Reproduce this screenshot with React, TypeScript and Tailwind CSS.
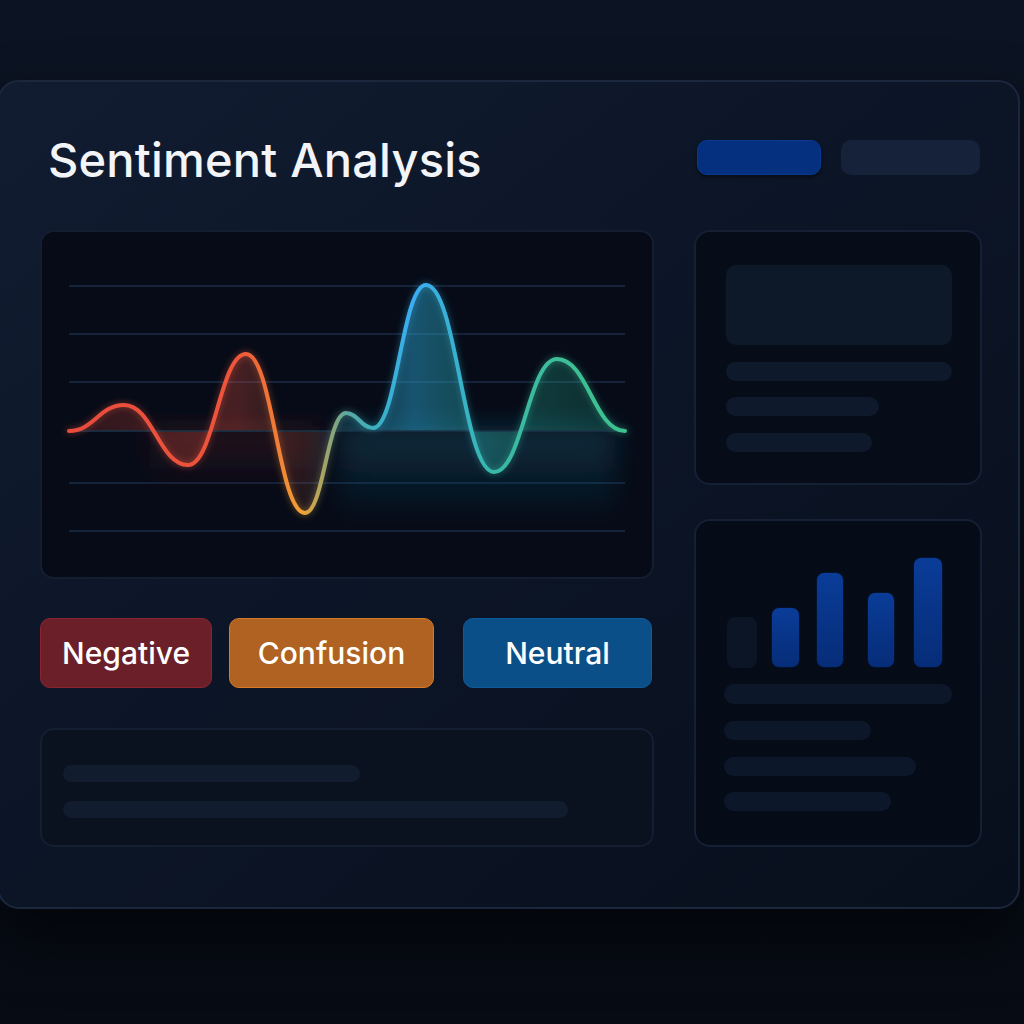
const points: [number, number][] = [
  [29, 201],
  [84, 175],
  [148, 235],
  [206, 124],
  [265, 283],
  [306, 183],
  [333, 198],
  [386, 55],
  [454, 242],
  [517, 129],
  [585, 201],
];

function smoothPath(pts: [number, number][]) {
  let d = `M${pts[0][0]} ${pts[0][1]}`;
  for (let i = 1; i < pts.length; i++) {
    const [x0, y0] = pts[i - 1];
    const [x1, y1] = pts[i];
    const dx = (x1 - x0) * 0.45;
    d += ` C${x0 + dx} ${y0} ${x1 - dx} ${y1} ${x1} ${y1}`;
  }
  return d;
}

const gridLines = [56, 104, 152, 253, 301];

function WaveChart() {
  const line = smoothPath(points);
  const area = `${line} L585 201 L29 201 Z`;

  return (
    <svg viewBox="2 2 610 345" preserveAspectRatio="none" className="w-full h-full">
      <defs>
        <linearGradient id="stroke" gradientUnits="userSpaceOnUse" x1="29" y1="0" x2="585" y2="0">
          <stop offset="0" stopColor="#e74c3c" />
          <stop offset="0.3" stopColor="#ee553b" />
          <stop offset="0.37" stopColor="#f07a35" />
          <stop offset="0.42" stopColor="#f2a535" />
          <stop offset="0.46" stopColor="#a0a46a" />
          <stop offset="0.5" stopColor="#5aa8a0" />
          <stop offset="0.55" stopColor="#3ab0c0" />
          <stop offset="0.62" stopColor="#3aaef2" />
          <stop offset="0.68" stopColor="#38b0d8" />
          <stop offset="0.76" stopColor="#38b8a8" />
          <stop offset="0.88" stopColor="#3dbe98" />
          <stop offset="1" stopColor="#3cc18e" />
        </linearGradient>
        <linearGradient id="fill" gradientUnits="userSpaceOnUse" x1="29" y1="0" x2="585" y2="0">
          <stop offset="0" stopColor="#e04a3a" stopOpacity="0.18" />
          <stop offset="0.3" stopColor="#e0503e" stopOpacity="0.3" />
          <stop offset="0.42" stopColor="#c06040" stopOpacity="0.15" />
          <stop offset="0.5" stopColor="#2a8ea8" stopOpacity="0.25" />
          <stop offset="0.62" stopColor="#2a9cc8" stopOpacity="0.5" />
          <stop offset="0.8" stopColor="#2ab09a" stopOpacity="0.3" />
          <stop offset="1" stopColor="#2ab08a" stopOpacity="0.2" />
        </linearGradient>
        <linearGradient id="glow" x1="0" y1="0" x2="0" y2="1">
          <stop offset="0" stopColor="#1b6f8c" stopOpacity="0.35" />
          <stop offset="1" stopColor="#1b6f8c" stopOpacity="0" />
        </linearGradient>
        <linearGradient id="redglow" x1="0" y1="0" x2="0" y2="1">
          <stop offset="0" stopColor="#7a2a30" stopOpacity="0.3" />
          <stop offset="1" stopColor="#7a2a30" stopOpacity="0" />
        </linearGradient>
        <filter id="soft" x="-20%" y="-20%" width="140%" height="140%">
          <feGaussianBlur stdDeviation="12" />
        </filter>
        <filter id="bloom" x="-10%" y="-10%" width="120%" height="120%">
          <feGaussianBlur stdDeviation="3" />
        </filter>
      </defs>

      {gridLines.map((y) => (
        <line key={y} x1="29" x2="585" y1={y} y2={y} stroke="#14223a" strokeWidth="2" />
      ))}

      <rect x="300" y="196" width="275" height="95" fill="url(#glow)" filter="url(#soft)" />
      <rect x="110" y="196" width="170" height="60" fill="url(#redglow)" filter="url(#soft)" />
      <path d={area} fill="url(#fill)" />
      <line x1="29" x2="585" y1="201" y2="201" stroke="#1a3448" strokeWidth="1.5" />
      <path d={line} fill="none" stroke="url(#stroke)" strokeWidth="6" strokeOpacity="0.35" strokeLinecap="round" filter="url(#bloom)" />
      <path d={line} fill="none" stroke="url(#stroke)" strokeWidth="4" strokeLinecap="round" />
    </svg>
  );
}

export default function App() {
  return (
    <div className="min-h-screen w-full bg-gradient-to-b from-[#0c1322] via-[#0a101d] to-[#070b14] pt-[80px] font-['Inter',sans-serif] overflow-hidden">
      <div className="w-[1023px] h-[829px] -ml-[3px] rounded-[22px] border-2 border-[#1a273d] bg-gradient-to-br from-[#111c31] via-[#0c1526] to-[#080f1c] shadow-[0_30px_60px_rgba(0,0,0,0.6)] pl-[41px] pr-[36px] pt-[58px]">
        {/* Header */}
        <div className="flex items-center justify-between h-[35px]">
          <h1 className="text-[47px] leading-none font-medium text-[#f2f4f7] ml-[8px] mt-[4px] tracking-[0.2px]">
            Sentiment Analysis
          </h1>
          <div className="flex gap-[20px] mr-[2px]">
            <div className="w-[124px] h-[35px] rounded-[10px] bg-[#04307f] border border-[#0a3a90] shadow-[0_2px_4px_rgba(0,0,0,0.5)]" />
            <div className="w-[139px] h-[35px] rounded-[10px] bg-[#15223a]" />
          </div>
        </div>

        {/* Content */}
        <div className="flex gap-[40px] mt-[55px]">
          <div className="w-[614px] flex flex-col">
            <div className="h-[349px] rounded-[14px] border-2 border-[#141e31] bg-[#060b17] overflow-hidden">
              <WaveChart />
            </div>

            <div className="flex h-[70px] mt-[39px]">
              <div className="w-[172px] rounded-[10px] bg-[#6b1f29] border border-[#8a2530] flex items-center justify-center text-[30px] font-medium text-white">
                Negative
              </div>
              <div className="w-[205px] ml-[17px] rounded-[10px] bg-[#b06222] border border-[#d87a26] flex items-center justify-center text-[30px] font-medium text-white">
                Confusion
              </div>
              <div className="w-[189px] ml-[29px] rounded-[10px] bg-[#0b4f88] border border-[#0f5a9a] flex items-center justify-center text-[30px] font-medium text-white">
                Neutral
              </div>
            </div>

            <div className="h-[119px] mt-[40px] rounded-[14px] border-2 border-[#141e31] bg-[#0a1220] pl-[21px] pt-[35px]">
              <div className="w-[297px] h-[17px] rounded-full bg-[#111c2e]" />
              <div className="w-[505px] h-[17px] mt-[19px] rounded-full bg-[#111c2e]" />
            </div>
          </div>

          <div className="w-[288px] flex flex-col">
            <div className="h-[255px] rounded-[16px] border-2 border-[#152035] bg-[#060c18] pl-[30px] pt-[33px]">
              <div className="w-[226px] h-[80px] rounded-[10px] bg-[#0d1829]" />
              <div className="w-[226px] h-[19px] mt-[17px] rounded-full bg-[#0e192b]" />
              <div className="w-[153px] h-[19px] mt-[16px] rounded-full bg-[#0e192b]" />
              <div className="w-[146px] h-[19px] mt-[17px] rounded-full bg-[#0e192b]" />
            </div>

            <div className="h-[328px] mt-[34px] rounded-[16px] border-2 border-[#152035] bg-[#050b17] pl-[28px] pt-[36px]">
              <div className="flex items-end h-[111px]">
                <div className="w-[30px] h-[51px] ml-[3px] rounded-[8px] bg-[#0c1526]" />
                <div className="w-[29px] h-[61px] ml-[14px] rounded-[8px] bg-gradient-to-b from-[#0a3c98] to-[#062d78] border border-[#03122e]" />
                <div className="w-[28px] h-[96px] ml-[16px] rounded-[8px] bg-gradient-to-b from-[#0a3c98] to-[#062d78] border border-[#03122e]" />
                <div className="w-[28px] h-[76px] ml-[23px] rounded-[8px] bg-gradient-to-b from-[#0a3c98] to-[#062d78] border border-[#03122e]" />
                <div className="w-[30px] h-[111px] ml-[18px] rounded-[8px] bg-gradient-to-b from-[#0a3c98] to-[#062d78] border border-[#03122e]" />
              </div>
              <div className="w-[228px] h-[20px] mt-[16px] rounded-full bg-[#0c1829]" />
              <div className="w-[147px] h-[19px] mt-[17px] rounded-full bg-[#0c1829]" />
              <div className="w-[192px] h-[19px] mt-[17px] rounded-full bg-[#0c1829]" />
              <div className="w-[167px] h-[19px] mt-[16px] rounded-full bg-[#0c1829]" />
            </div>
          </div>
        </div>
      </div>
    </div>
  );
}
